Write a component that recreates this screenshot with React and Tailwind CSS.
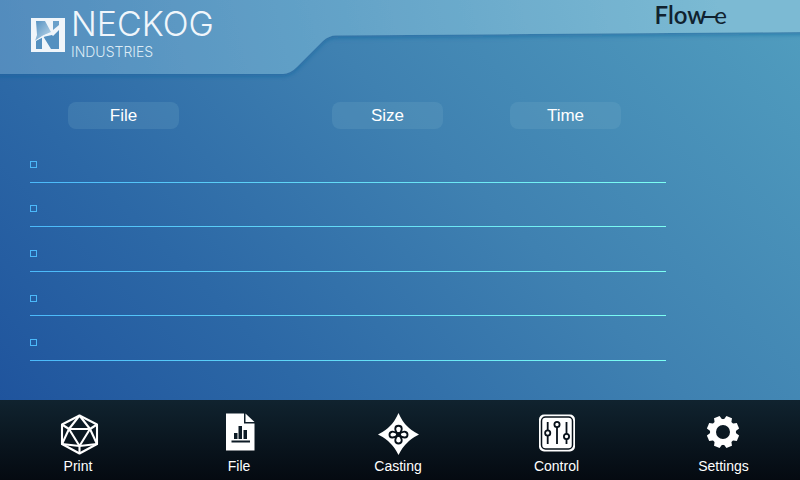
import React from "react";

const FILES = [1, 2, 3, 4, 5];
const GEAR_ANGLES = [22.5, 67.5, 112.5, 157.5];

function LogoMark() {
  return (
    <svg viewBox="0 0 34 34" className="size-[34px]" aria-hidden="true">
      <defs>
        <linearGradient id="shard" x1="0" y1="0" x2="1" y2="1">
          <stop offset="0" stopColor="#5490c0" />
          <stop offset="1" stopColor="#c3dbec" />
        </linearGradient>
      </defs>
      <rect width="34" height="34" fill="#f0f5fa" />
      <path d="M5 3h9l6 11-7 3-9 6 2-6z" fill="url(#shard)" />
      <path d="M5 23l6-4v12H5zM12 18l8-2 2 2 6-6v19h-8z" fill="#5490c0" />
      <path d="M22 3h6v4l-6 5z" fill="#6aa0ca" />
      <path d="M2 24 12 17.500l7-2L31 7 21 17l-7 1.500z" fill="#f0f5fa" />
    </svg>
  );
}

function PrintIcon() {
  return (
    <svg viewBox="0 0 42 42" className="size-[42px]" fill="none" stroke="white" strokeWidth="2.1" strokeLinejoin="round" aria-hidden="true">
      <path d="M22.5 2.5 40 11.5V31L22.5 40.5 5 31V11.5Z" />
      <path d="M12 16H33L22.5 33Z" />
      <path d="M22.5 2.5 12 16 5 11.5M22.5 2.5 33 16 40 11.5M12 16 5 31 22.5 33 40 31 33 16M22.5 33V40.5" />
    </svg>
  );
}

function FileIcon() {
  return (
    <svg viewBox="0 0 42 42" className="size-[42px]" aria-hidden="true">
      <path d="M8 0.5H26V10.5H36.5V37.5H8Z" fill="white" />
      <path d="M27.5 0.5 36.5 9H27.5Z" fill="white" />
      <path d="M16 20h3.500v6H16zM20.500 13H24v13h-3.500zM25.500 17H29v9h-3.500zM13.500 27.500H32v2H13.500z" fill="#0c1a25" />
    </svg>
  );
}

function CastingIcon() {
  return (
    <svg viewBox="0 0 42 42" className="size-[42px]" aria-hidden="true">
      <path d="M21.5 0Q25.5 9 30 13 34 17.500 42 21.5 34 25.500 30 30 25.500 34 21.5 42 17.500 34 13 30 9 25.500 1 21.5 9 17.500 13 13 17.500 9 21.5 0Z" fill="white" />
      <g fill="white" stroke="#071019" strokeWidth="1.9">
        <path d="M21.5 21.5C16.500 16.500 18 12.800 21.5 12.800S26.500 16.500 21.5 21.5Z" />
        <path d="M21.5 21.5C16.500 26.500 18 30.500 21.5 30.500S26.500 26.500 21.5 21.5Z" />
        <path d="M21.5 21.5C16.500 17 12.500 18.500 12.500 21.700S16.500 26 21.5 21.5Z" />
        <path d="M21.5 21.5C26.500 17 30.500 18.500 30.500 21.700S26.500 26 21.5 21.5Z" />
      </g>
      <circle cx="21.5" cy="21.5" r="2.5" fill="#071019" />
    </svg>
  );
}

function ControlIcon() {
  return (
    <svg viewBox="0 0 42 42" className="size-[42px]" aria-hidden="true">
      <rect x="3" y="1.5" width="36" height="37" rx="5" fill="white" />
      <rect x="5.5" y="4" width="31" height="32" rx="4" fill="none" stroke="#071019" strokeWidth="1.5" />
      <g fill="white" stroke="#071019" strokeWidth="1.8">
        <path d="M11.7 9V31M21 9V31M30.5 9V31" />
        <circle cx="11.7" cy="20" r="2.6" />
        <circle cx="21" cy="11.5" r="2.6" />
        <circle cx="30.5" cy="23.5" r="2.6" />
      </g>
    </svg>
  );
}

function SettingsIcon() {
  return (
    <svg viewBox="0 0 42 42" className="size-[42px]" aria-hidden="true">
      <circle cx="20" cy="19" r="10" fill="none" stroke="white" strokeWidth="6" />
      {GEAR_ANGLES.map((angle) => (
        <g key={angle} transform={`rotate(${angle} 20 19)`} fill="white">
          <path d="M17 2.8H23L24.300 8H15.700Z" />
          <path d="M17 35.2H23L24.300 30H15.700Z" />
        </g>
      ))}
    </svg>
  );
}

const NAV = [
  { label: "Print", Icon: PrintIcon },
  { label: "File", Icon: FileIcon },
  { label: "Casting", Icon: CastingIcon },
  { label: "Control", Icon: ControlIcon },
  { label: "Settings", Icon: SettingsIcon },
];

function Header() {
  return (
    <header className="relative h-[75px]">
      <svg viewBox="0 0 800 84" preserveAspectRatio="none" className="absolute inset-x-0 top-0 h-[84px] w-full" aria-hidden="true">
        <defs>
          <linearGradient id="banner" gradientUnits="userSpaceOnUse" x1="0" y1="80" x2="700" y2="-80">
            <stop offset="0" stopColor="#528bbd" />
            <stop offset="0.4" stopColor="#609fc6" />
            <stop offset="1" stopColor="#7bbad3" />
          </linearGradient>
          <filter id="shade" x="-5%" y="-10%" width="110%" height="130%">
            <feDropShadow dx="0" dy="2" stdDeviation="2.5" floodColor="#08609b" floodOpacity="0.6" />
          </filter>
        </defs>
        <path d="M-20-20H820V32L336 35.5Q329 35.5 323 41L297 67Q290 74 283 74H-20Z" fill="url(#banner)" filter="url(#shade)" />
      </svg>
      <div className="relative flex items-start justify-between pr-[73px] pl-[31px]">
        <div className="flex items-start gap-1.5">
          <div className="pt-[18px]">
            <LogoMark />
          </div>
          <div className="pt-[3px] font-[Inter,sans-serif] text-[#f0f6fb]">
            <div className="text-[34px] leading-[41px] font-light">NECKOG</div>
            <div className="text-sm leading-4 font-light text-[#dcebf5]">INDUSTRIES</div>
          </div>
        </div>
        <div className="flex items-center pt-[3px] font-[Lato,sans-serif] text-2xl leading-6 text-[#10222f]">
          <span className="font-semibold">Flow</span>
          <span className="-mx-0.5 mt-1 h-0.5 w-3 bg-[#10222f]" />
          <span className="font-normal">e</span>
        </div>
      </div>
    </header>
  );
}

function ColumnButton({ children }) {
  return (
    <button className="block h-[27px] w-[111px] rounded-lg bg-[#7fb4cf]/20 text-[17px] font-normal text-white">
      {children}
    </button>
  );
}

export default function App() {
  return (
    <div className="flex min-h-screen flex-col bg-[linear-gradient(45deg,#1c4f9b_0%,#2c68a6_31%,#3f81b1_60%,#519ebf_100%)] font-['Liberation_Sans',Arial,sans-serif]">
      <Header />
      <main className="flex-1 pt-[27px] pr-[134px] pl-[30px]">
        <table className="block w-full text-left">
          <thead className="block">
            <tr className="grid grid-cols-[264fr_178fr_156fr] pl-[38px]">
              <th className="p-0"><ColumnButton>File</ColumnButton></th>
              <th className="p-0"><ColumnButton>Size</ColumnButton></th>
              <th className="p-0"><ColumnButton>Time</ColumnButton></th>
            </tr>
          </thead>
          <tbody className="mt-[9px] grid h-[223px] grid-rows-5">
            {FILES.map((id) => (
              <tr
                key={id}
                className="flex items-center bg-[linear-gradient(90deg,#4bb9fa,#7dfff2)] bg-[length:100%_1px] bg-bottom bg-no-repeat pt-2"
              >
                <td className="flex p-0">
                  <input
                    type="checkbox"
                    aria-label={`Select file ${id}`}
                    className="size-[7px] appearance-none border border-[#4bb9fa] checked:bg-[#4bb9fa]"
                  />
                </td>
              </tr>
            ))}
          </tbody>
        </table>
      </main>
      <nav className="grid h-20 grid-cols-[140fr_182fr_136fr_181fr_153fr] bg-linear-to-b from-[#10232f] to-[#050a11] pl-2">
        {NAV.map(({ label, Icon }) => (
          <button key={label} className="flex flex-col items-center pt-[13px] text-sm leading-[22px] text-white">
            <Icon />
            {label}
          </button>
        ))}
      </nav>
    </div>
  );
}
